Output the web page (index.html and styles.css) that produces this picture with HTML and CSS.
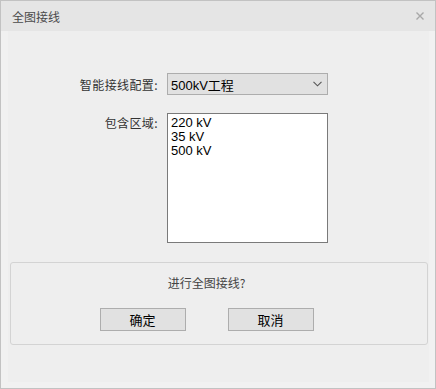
FILE: index.html
```html
<!DOCTYPE html>
<html>
<head>
<meta charset="utf-8"/>
<title>全图接线</title>
<link rel="stylesheet" href="styles.css">
</head>
<body>
<div class="dialog">
  <div class="titlebar">
    <span class="title">全图接线</span>
    <svg class="close" width="8" height="8" viewBox="0 0 8 8">
      <path d="M0.5 0.5 L7.5 7.5 M7.5 0.5 L0.5 7.5" stroke="#a8a8a8" stroke-width="1.4" fill="none"/>
    </svg>
  </div>
  <div class="frame">
    <div class="panel">
      <div class="form">
        <label class="label">智能接线配置:</label>
        <div class="combo">
          <span class="combo-text">500kV工程</span>
          <svg class="chevron" width="9" height="6" viewBox="0 0 9 6">
            <path d="M0.5 0.8 L4.5 4.8 L8.5 0.8" stroke="#555" stroke-width="1.1" fill="none"/>
          </svg>
        </div>
        <label class="label label-top">包含区域:</label>
        <div class="listbox">
          <div class="item">220 kV</div>
          <div class="item">35 kV</div>
          <div class="item">500 kV</div>
        </div>
      </div>
      <div class="confirm">
        <p class="question">进行全图接线?</p>
        <div class="buttons">
          <button class="btn">确定</button>
          <button class="btn">取消</button>
        </div>
      </div>
    </div>
  </div>
</div>
</body>
</html>
```

FILE: styles.css
```css
html, body {
  margin: 0;
  padding: 0;
  background: #ffffff;
}

body {
  font-family: "Noto Sans CJK SC", "Liberation Sans", sans-serif;
  font-size: 12px;
  color: #333;
}

.dialog {
  width: 436px;
  height: 389px;
  box-sizing: border-box;
  border: 1px solid #c2c2c2;
  background: #f1f1f1;
  display: flex;
  flex-direction: column;
}

.titlebar {
  height: 30px;
  background: #e5e5e5;
  display: flex;
  align-items: center;
  justify-content: space-between;
  padding: 0 11px 0 11px;
  flex-shrink: 0;
}

.title {
  font-size: 12px;
  color: #4a4a4a;
}

.close {
  display: block;
  margin-top: -1px;
}

.frame {
  flex: 1;
  padding: 0 6px 6px 7px;
  display: flex;
}

.panel {
  flex: 1;
  background: #eeeeee;
  padding: 42px 1px 0 2px;
}

.form {
  display: grid;
  grid-template-columns: 148px 161px;
  column-gap: 9px;
  row-gap: 18px;
  align-items: center;
}

.label {
  text-align: right;
  color: #333;
  font-size: 12px;
  letter-spacing: 0.4px;
}

.label-top {
  align-self: start;
  margin-top: 1px;
}

.combo {
  height: 22px;
  box-sizing: border-box;
  border: 1px solid #adadad;
  background: #e1e1e1;
  display: flex;
  align-items: center;
  justify-content: space-between;
  padding: 0 5px 0 3px;
}

.combo-text {
  font-family: "Liberation Sans", "Noto Sans CJK SC", sans-serif;
  font-size: 13px;
  color: #000;
}

.listbox {
  height: 130px;
  box-sizing: border-box;
  border: 1px solid #7a7a7a;
  background: #fff;
  padding: 2px 3px;
}

.item {
  font-family: "Liberation Sans", sans-serif;
  font-size: 13px;
  line-height: 14px;
  color: #000;
}

.confirm {
  margin-top: 19px;
  height: 83px;
  box-sizing: border-box;
  border: 1px solid #d3d3d3;
  border-radius: 3px;
  padding: 12px 25px 0 0;
  text-align: center;
}

.question {
  margin: 0;
  line-height: 16px;
  color: #444;
}

.buttons {
  display: flex;
  justify-content: center;
  gap: 42px;
  margin-top: 17px;
}

.btn {
  width: 86px;
  height: 23px;
  box-sizing: border-box;
  border: 1px solid #adadad;
  background: #e1e1e1;
  font-family: "Noto Sans CJK SC", sans-serif;
  font-size: 13px;
  color: #000;
  padding: 0;
}
```
